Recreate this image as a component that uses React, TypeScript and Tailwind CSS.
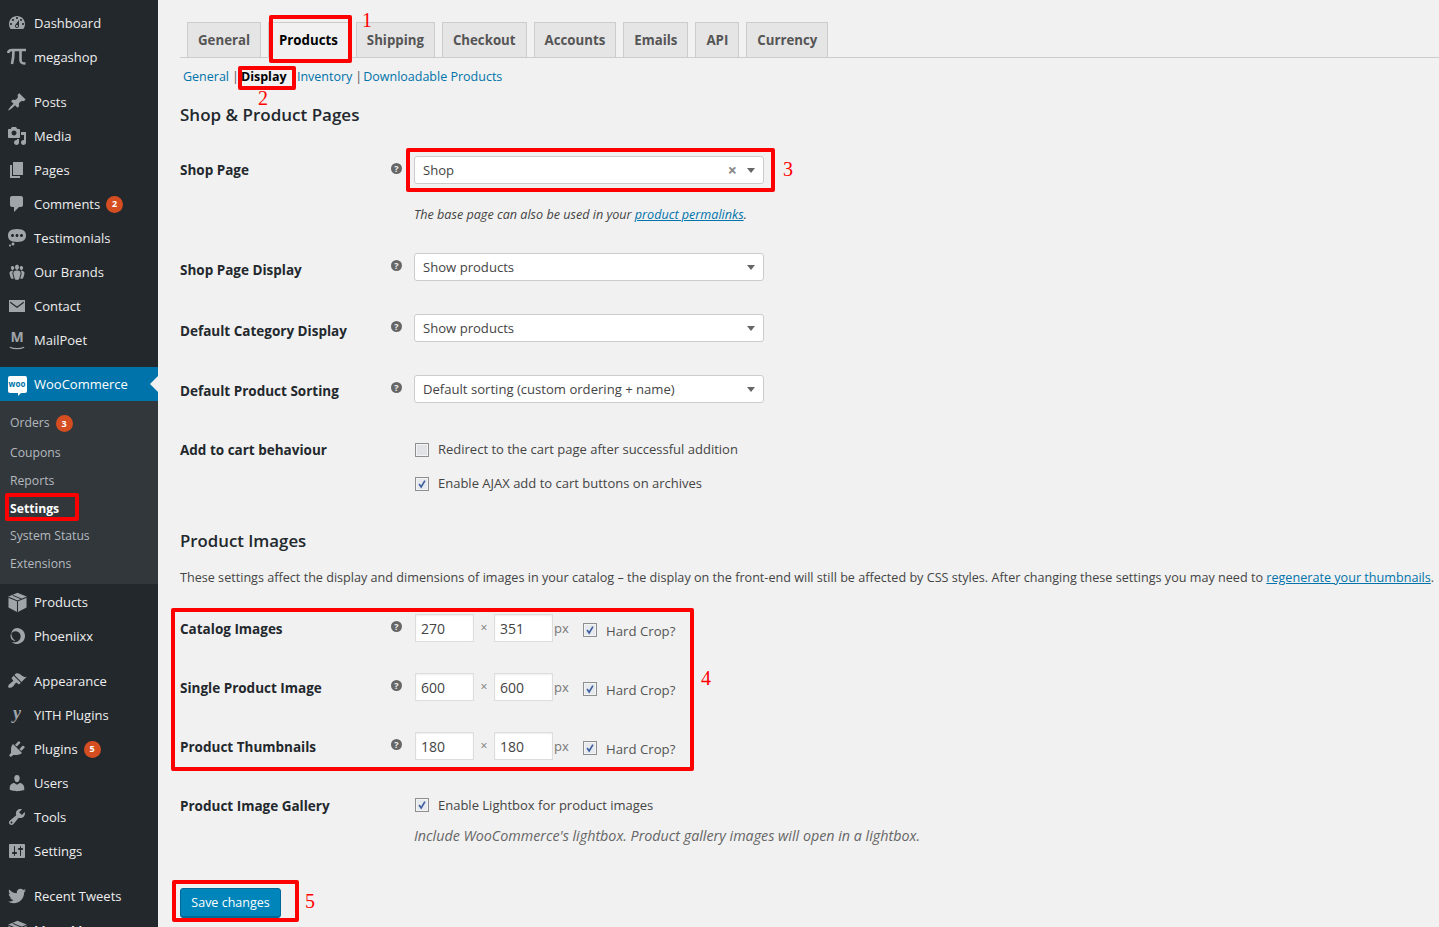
import type { ReactNode } from "react";

const d = {
  dashboard:
    "M3.76 16h12.48c1.1-1.37 1.76-3.11 1.76-5 0-4.42-3.58-8-8-8s-8 3.58-8 8c0 1.89.66 3.63 1.76 5zM10 4c.55 0 1 .45 1 1s-.45 1-1 1-1-.45-1-1 .45-1 1-1zM6 6c.55 0 1 .45 1 1s-.45 1-1 1-1-.45-1-1 .45-1 1-1zm8 0c.55 0 1 .45 1 1s-.45 1-1 1-1-.45-1-1 .45-1 1-1zm-5.37 5.55L12 7v6c0 1.1-.9 2-2 2s-2-.9-2-2c0-.57.24-1.08.63-1.45zM4 10c.55 0 1 .45 1 1s-.45 1-1 1-1-.45-1-1 .45-1 1-1zm12 0c.55 0 1 .45 1 1s-.45 1-1 1-1-.45-1-1 .45-1 1-1zm-5 3c0-.55-.45-1-1-1s-1 .45-1 1 .45 1 1 1 1-.45 1-1z",
  pin: "M10.44 3.02l1.82-1.82 6.36 6.35-1.83 1.82c-1.05-.68-2.48-.57-3.41.36l-.75.75c-.92.93-1.04 2.35-.35 3.41l-1.83 1.82-2.41-2.41-2.8 2.79c-.42.42-3.38 2.71-3.8 2.29s1.86-3.39 2.28-3.81l2.79-2.79L4.1 9.36l1.83-1.82c1.05.69 2.48.57 3.4-.36l.75-.75c.93-.92 1.05-2.35.36-3.41z",
  media:
    "M13 11V4c0-.55-.45-1-1-1h-1.67L9 1H5L3.67 3H2c-.55 0-1 .45-1 1v7c0 .55.45 1 1 1h10c.55 0 1-.45 1-1zM7 4.5c1.38 0 2.5 1.12 2.5 2.5S8.38 9.5 7 9.5 4.5 8.38 4.5 7 5.62 4.5 7 4.5zM14 6h5v10.5c0 1.38-1.12 2.5-2.5 2.5S14 17.88 14 16.5s1.12-2.5 2.5-2.5c.17 0 .34.02.5.05V9h-3V6zm-4 8.05V13h2v3.5c0 1.38-1.12 2.5-2.5 2.5S7 17.88 7 16.5 8.12 14 9.5 14c.17 0 .34.02.5.05z",
  page: "M6 15V2h10v13H6zm-1 1h8v2H3V5h2v11z",
  comment:
    "M5 2h9c1.1 0 2 .9 2 2v7c0 1.1-.9 2-2 2h-2l-5 5v-5H5c-1.1 0-2-.9-2-2V4c0-1.1.9-2 2-2z",
  status:
    "M10 1c7 0 9 2.91 9 6.5S17 14 10 14s-9-2.91-9-6.5S3 1 10 1zM5.5 9C6.33 9 7 8.33 7 7.5S6.33 6 5.5 6 4 6.67 4 7.5 4.67 9 5.5 9zM10 9c.83 0 1.5-.67 1.5-1.5S10.83 6 10 6s-1.5.67-1.5 1.5S9.17 9 10 9zm4.5 0c.83 0 1.5-.67 1.5-1.5S15.33 6 14.5 6 13 6.67 13 7.5 13.67 9 14.5 9zM6 14.5c.83 0 1.5.67 1.5 1.5s-.67 1.5-1.5 1.5-1.5-.67-1.5-1.5.67-1.5 1.5-1.5zm-3 2c.55 0 1 .45 1 1s-.45 1-1 1-1-.45-1-1 .45-1 1-1z",
  groups:
    "M8.03 4.46c-.29 1.28.55 3.46 1.97 3.46 1.41 0 2.25-2.18 1.96-3.46-.22-.98-1.08-1.63-1.96-1.63-.89 0-1.74.65-1.97 1.63zm-4.13.9c-.25 1.08.47 2.93 1.67 2.93s1.92-1.85 1.67-2.93c-.19-.83-.92-1.39-1.67-1.39s-1.48.56-1.67 1.39zm8.86 0c-.25 1.08.47 2.93 1.66 2.93 1.2 0 1.92-1.85 1.67-2.93-.19-.83-.92-1.39-1.67-1.39-.74 0-1.47.56-1.66 1.39zm-.59 11.43l1.25-4.3C14.2 10 12.71 8.47 10 8.47c-2.72 0-4.21 1.53-3.44 4.02l1.26 4.3C8.05 17.51 9 18 10 18c.98 0 1.94-.49 2.17-1.21zm-6.1-7.63c-.49.67-.96 1.83-.42 3.59l1.12 3.79c-.34.2-.77.31-1.2.31-.85 0-1.65-.41-1.85-1.03l-1.07-3.65c-.65-2.11.61-3.4 2.92-3.4.27 0 .54.02.79.06-.1.1-.2.22-.29.33zm8.35-.39c2.31 0 3.58 1.29 2.92 3.4l-1.07 3.65c-.2.62-1 1.03-1.85 1.03-.43 0-.86-.11-1.2-.31l1.11-3.79c.55-1.76.08-2.92-.42-3.59-.09-.11-.18-.23-.28-.33.25-.04.51-.06.79-.06z",
  mail: "M2 4h16v12H2V4zm1.200 1.600v1.500L10 12l6.800-4.900V5.600L10 10.500 3.200 5.600z",
  appearance:
    "M14.48 11.06L7.41 3.99l1.5-1.5c.5-.56 2.3-.47 3.51.32 1.21.8 1.43 1.28 2.91 2.1 1.18.64 2.45 1.26 4.45.85zm-.71.71L6.7 4.7 4.93 6.47c-.39.39-.39 1.02 0 1.41l1.06 1.06c.39.39.39 1.03 0 1.42-.6.6-1.43 1.11-2.21 1.69-.35.26-.7.53-1.01.84C1.43 13.23.75 15.82 1.5 16.5s3.33 0 4.68-1.35c.32-.31.58-.66.84-1.01.58-.78 1.09-1.61 1.69-2.21.39-.39 1.02-.39 1.41 0l1.06 1.06c.39.39 1.02.39 1.41 0z",
  plugin:
    "M13.11 4.36L9.87 7.6 8 5.73l3.24-3.24c.35-.34 1.05-.2 1.56.32.52.51.66 1.21.31 1.55zm-8 1.77l.91-1.12 9.01 9.01-1.19.84c-.71.71-2.63 1.16-3.82 1.16H6.14L4.9 17.26c-.59.59-1.54.59-2.12 0-.59-.58-.59-1.53 0-2.12l1.24-1.24v-3.88c0-1.13.4-3.19 1.09-3.89zm7.26 3.97l3.24-3.24c.34-.35 1.04-.21 1.55.31.52.51.66 1.21.31 1.55l-3.24 3.25z",
  users:
    "M10 9.25c-2.27 0-2.73-3.44-2.73-3.44C7 4.02 7.82 2 9.97 2c2.16 0 2.98 2.02 2.71 3.81 0 0-.41 3.44-2.68 3.44zm0 2.57L12.72 10c2.39 0 4.52 2.33 4.52 4.53v2.49s-3.65 1.13-7.24 1.13c-3.65 0-7.24-1.13-7.24-1.13v-2.49c0-2.25 1.94-4.48 4.47-4.48z",
  tools:
    "M16.68 9.77c-1.34 1.34-3.3 1.67-4.95.99l-5.41 6.52c-.99.99-2.59.99-3.58 0s-.99-2.59 0-3.57l6.52-5.42c-.68-1.65-.35-3.61.99-4.95 1.28-1.28 3.12-1.62 4.72-1.06l-2.89 2.89 2.82 2.82 2.86-2.87c.53 1.58.18 3.39-1.08 4.65zM3.81 16.21c.4.39 1.04.39 1.43 0 .4-.4.4-1.04 0-1.43-.39-.4-1.03-.4-1.43 0-.39.39-.39 1.03 0 1.43z",
  settings:
    "M18 16V4c0-.55-.45-1-1-1H3c-.55 0-1 .45-1 1v12c0 .55.45 1 1 1h14c.55 0 1-.45 1-1zM8 11h1c.55 0 1 .45 1 1s-.45 1-1 1H8v1.5c0 .28-.22.5-.5.5s-.5-.22-.5-.5V13H6c-.55 0-1-.45-1-1s.45-1 1-1h1V5.5c0-.28.22-.5.5-.5s.5.22.5.5V11zm5-2h-1c-.55 0-1-.45-1-1s.45-1 1-1h1V5.5c0-.28.22-.5.5-.5s.5.22.5.5V7h1c.55 0 1 .45 1 1s-.45 1-1 1h-1v5.5c0 .28-.22.5-.5.5s-.5-.22-.5-.5V9z",
  twitter:
    "M18.94 4.46c-.49.73-1.11 1.38-1.83 1.9.01.15.01.31.01.47 0 4.85-3.69 10.44-10.43 10.44-2.07 0-4-.61-5.63-1.65.29.03.58.05.88.05 1.72 0 3.3-.59 4.55-1.57-1.6-.03-2.95-1.09-3.42-2.55.22.04.45.07.69.07.33 0 .66-.05.96-.13-1.67-.34-2.94-1.82-2.94-3.6v-.04c.5.27 1.06.44 1.66.46-.98-.66-1.63-1.78-1.63-3.06 0-.67.18-1.3.5-1.84 1.81 2.22 4.51 3.68 7.56 3.83-.06-.27-.1-.55-.1-.84 0-2.02 1.65-3.66 3.67-3.66 1.06 0 2.01.44 2.68 1.16.83-.17 1.62-.47 2.33-.89-.28.85-.86 1.57-1.62 2.02.75-.08 1.45-.28 2.11-.57z",
  phoenix:
    "M10 2a8 8 0 1 1-5.500 13.800C7 17 12.500 16.500 13.500 11.500 14.200 8 12 5.500 9 5.200 6.500 5 5 6.300 4.300 8 4.500 4.800 7 2 10 2zM3.500 9.500c0-1 .4-1.800 1-2.300-.3 2 .5 5.500 4 7.500-3 .5-5-2-5-5.200z",
};

function Dash({ name }: { name: keyof typeof d }) {
  return (
    <svg viewBox="0 0 20 20" className="h-5 w-5 fill-[#a0a5aa]">
      <path d={d[name]} fillRule="evenodd" />
    </svg>
  );
}

function BoxIcon() {
  return (
    <svg viewBox="0 0 20 20" className="h-[21px] w-[21px]">
      <path d="M10 .8l8.600 3.400v10.600L10 19.400l-8.600-4.600V4.200z" className="fill-[#a0a5aa]" />
      <path
        d="M1.400 5L10 8.600 18.600 5M10 8.600V19M5.500 3.200l8.600 3.600"
        className="fill-none stroke-[#23282d]"
      />
    </svg>
  );
}

function Badge({ n }: { n: number }) {
  return (
    <span className="ml-[6px] flex h-[17px] w-[17px] items-center justify-center rounded-full bg-[#d54e21] text-[9px] font-bold text-white">
      {n}
    </span>
  );
}

function Item({
  icon,
  label,
  badge,
  gap,
}: {
  icon: ReactNode;
  label: string;
  badge?: number;
  gap?: boolean;
}) {
  return (
    <li
      className={`flex h-[34px] items-center text-[#eee] ${gap ? "mt-[11px]" : ""}`}
    >
      <span className="flex w-[34px] justify-center">{icon}</span>
      <span className="mt-[2px]">{label}</span>
      {badge ? <Badge n={badge} /> : null}
    </li>
  );
}

function Sidebar() {
  return (
    <aside className="w-[158px] shrink-0 bg-[#23282d] pt-[6px] text-[13px]">
      <ul>
        <Item icon={<Dash name="dashboard" />} label="Dashboard" />
        <Item
          icon={
            <svg viewBox="0 0 20 20" className="h-5 w-5 fill-none stroke-[#a0a5aa] stroke-[2.6]">
              <path d="M1 6c.5-2 2-3 4-3h14M6.500 3c0 6-.5 10-1.500 14M13.500 3v10c0 2.500 1 3.500 5 3.500" />
            </svg>
          }
          label="megashop"
        />
        <Item gap icon={<Dash name="pin" />} label="Posts" />
        <Item icon={<Dash name="media" />} label="Media" />
        <Item icon={<Dash name="page" />} label="Pages" />
        <Item icon={<Dash name="comment" />} label="Comments" badge={2} />
        <Item icon={<Dash name="status" />} label="Testimonials" />
        <Item icon={<Dash name="groups" />} label="Our Brands" />
        <Item icon={<Dash name="mail" />} label="Contact" />
        <Item
          icon={
            <span className="flex h-5 w-5 flex-col items-center leading-none text-[#a0a5aa]">
              <span className="text-[14px] font-bold">M</span>
              <svg viewBox="0 0 20 4" className="mt-[2px] h-1 w-4 fill-none stroke-[#a0a5aa] stroke-[1.5]">
                <path d="M1 1c5 2.500 13 2.500 18 0" />
              </svg>
            </span>
          }
          label="MailPoet"
        />
      </ul>

      <div className="relative mt-[10px] flex h-[34px] items-center bg-[#0073aa] text-white">
        <span className="flex w-[34px] justify-center">
          <span className="relative flex h-[17px] w-[19px] items-center justify-center rounded-[2px] bg-white text-[8px] font-bold leading-none text-[#0073aa]">
            woo
            <span className="absolute -bottom-[3px] left-[10px] border-r-[3px] border-t-[3px] border-r-transparent border-t-white" />
          </span>
        </span>
        <span className="mt-[2px]">WooCommerce</span>
        <span className="absolute right-0 top-[9px] border-y-[8px] border-r-[8px] border-y-transparent border-r-[#f1f1f1]" />
      </div>
      <ul className="h-[183px] bg-[#32373c] pl-[10px] pt-[7px] text-[12.200px] text-[#b4b9be]">
        <li className="flex h-[31px] items-center">
          Orders
          <Badge n={3} />
        </li>
        <li className="flex h-[28px] items-center">Coupons</li>
        <li className="flex h-[28px] items-center">Reports</li>
        <li className="flex h-[28px] items-center font-bold text-white">Settings</li>
        <li className="flex h-[27px] items-center">System Status</li>
        <li className="flex h-[28px] items-center">Extensions</li>
      </ul>

      <ul className="pt-px">
        <Item icon={<BoxIcon />} label="Products" />
        <Item icon={<Dash name="phoenix" />} label="Phoeniixx" />
        <Item gap icon={<Dash name="appearance" />} label="Appearance" />
        <Item
          icon={
            <span className="-mt-1 font-['Liberation_Serif',serif] text-[18px] font-bold italic leading-none text-[#a0a5aa]">
              y
            </span>
          }
          label="YITH Plugins"
        />
        <Item icon={<Dash name="plugin" />} label="Plugins" badge={5} />
        <Item icon={<Dash name="users" />} label="Users" />
        <Item icon={<Dash name="tools" />} label="Tools" />
        <Item icon={<Dash name="settings" />} label="Settings" />
        <Item gap icon={<Dash name="twitter" />} label="Recent Tweets" />
        <Item icon={<BoxIcon />} label="Mega Menu" />
      </ul>
    </aside>
  );
}

function Tab({ label, active }: { label: string; active?: boolean }) {
  return (
    <div
      className={`-mb-px flex h-9 items-center border border-[#ccc] px-[10px] text-[13.250px] font-bold ${
        active
          ? "border-b-[#f1f1f1] bg-[#f1f1f1] text-black"
          : "bg-[#e5e5e5] text-[#555]"
      }`}
    >
      <span className="mt-px">{label}</span>
    </div>
  );
}

function Help() {
  return (
    <span className="flex h-[11px] w-[11px] items-center justify-center rounded-full bg-[#666] text-[9px] font-bold leading-none text-[#f1f1f1]">
      ?
    </span>
  );
}

function Checkbox() {
  return (
    <span className="flex h-[14px] w-[14px] shrink-0 items-center justify-center border border-[#8e8f8f] bg-[#e6e9ee] shadow-[inset_0_0_0_1px_#f4f4f4]">
      <svg viewBox="0 0 12 12" className="h-[10px] w-[10px] fill-none stroke-[#3f5f9e] stroke-2">
        <path d="M2.500 6 5 9.500 9.500 2" />
      </svg>
    </span>
  );
}

function EmptyCheckbox() {
  return (
    <span className="h-[14px] w-[14px] shrink-0 border border-[#8e8f8f] bg-[#e2e3e6] shadow-[inset_0_0_0_1px_#f4f4f4]" />
  );
}

function Row({
  label,
  className,
  labelClass = "",
  help = true,
  children,
}: {
  label: string;
  className: string;
  labelClass?: string;
  help?: boolean;
  children: ReactNode;
}) {
  return (
    <div className={`flex ${className}`}>
      <div className="flex h-7 w-[234px] shrink-0 items-center">
        <span className={`w-[211px] text-[13.500px] font-bold text-[#23282d] ${labelClass}`}>
          {label}
        </span>
        {help ? (
          <span className="-mt-[3px]">
            <Help />
          </span>
        ) : null}
      </div>
      <div>{children}</div>
    </div>
  );
}

function Select({ value, clear }: { value: string; clear?: boolean }) {
  return (
    <div className="flex h-7 w-[350px] items-center rounded-[3px] border border-[#ccc] bg-white pl-2 pr-[8px] text-[13.100px] text-[#444]">
      <span className="mt-[2px] flex-1">{value}</span>
      {clear ? (
        <span className="mr-[10px] text-[16px] font-bold leading-none text-[#888]">×</span>
      ) : null}
      <span className="mt-px border-x-[4px] border-t-[5px] border-x-transparent border-t-[#666]" />
    </div>
  );
}

function Dimensions({ w, h }: { w: string; h: string }) {
  return (
    <div className="flex h-7 items-center text-[14px] text-[#444]">
      <span className="ml-px flex h-7 w-[59px] items-center border border-[#ddd] bg-white pl-[5px] shadow-[inset_0_1px_2px_rgba(0,0,0,0.07)]">
        {w}
      </span>
      <span className="flex w-[20px] justify-center text-[12px] text-[#777]">×</span>
      <span className="flex h-7 w-[59px] items-center border border-[#ddd] bg-white pl-[5px] shadow-[inset_0_1px_2px_rgba(0,0,0,0.07)]">
        {h}
      </span>
      <span className="ml-px mt-[2px] w-[29px] text-[13px] text-[#777]">px</span>
      <span className="mt-[4px]">
        <Checkbox />
      </span>
      <span className="ml-[9px] mt-[8px] text-[13.200px] text-[#555]">Hard Crop?</span>
    </div>
  );
}

function Annotation({ className }: { className: string }) {
  return (
    <div
      className={`pointer-events-none absolute rounded-[2px] border-[4px] border-[#ff0000] ${className}`}
    />
  );
}

function Mark({ n, className }: { n: number; className: string }) {
  return (
    <span
      className={`absolute font-['Liberation_Serif',serif] text-[20px] leading-[16px] text-[#ff0000] ${className}`}
    >
      {n}
    </span>
  );
}

export default function App() {
  return (
    <div className="relative flex h-[927px] overflow-hidden bg-[#f1f1f1] font-['Open_Sans',sans-serif]">
      <Sidebar />
      <main className="min-w-0 flex-1 pl-[22px] text-[#444]">
        <nav className="mt-[22px] flex h-9 gap-[7px] border-b border-[#ccc] pl-[7px]">
          <Tab label="General" />
          <Tab label="Products" active />
          <Tab label="Shipping" />
          <Tab label="Checkout" />
          <Tab label="Accounts" />
          <Tab label="Emails" />
          <Tab label="API" />
          <Tab label="Currency" />
        </nav>

        <div className="mt-[9px] flex h-5 items-center pl-[3px] text-[12.500px] text-[#0073aa]">
          <span>General</span>
          <span className="ml-[3px] text-[#555]">|</span>
          <span className="ml-[2px] w-[56px] font-bold text-black">Display</span>
          <span>Inventory</span>
          <span className="ml-[3px] mr-[1px] text-[#555]">|</span>
          <span>Downloadable Products</span>
        </div>

        <h2 className="mt-[19px] text-[17px] font-semibold leading-[18px] text-[#23282d]">
          Shop &amp; Product Pages
        </h2>

        <Row label="Shop Page" className="mt-[32px]">
          <Select value="Shop" clear />
          <p className="mt-[21px] text-[12.600px] italic leading-5 text-[#444]">
            The base page can also be used in your{" "}
            <span className="text-[#0073aa] underline">product permalinks</span>.
          </p>
        </Row>
        <Row label="Shop Page Display" labelClass="mt-[6px]" className="mt-[28px]">
          <Select value="Show products" />
        </Row>
        <Row label="Default Category Display" labelClass="mt-[6px]" className="mt-[33px]">
          <Select value="Show products" />
        </Row>
        <Row label="Default Product Sorting" labelClass="mt-[4px]" className="mt-[33px]">
          <Select value="Default sorting (custom ordering + name)" />
        </Row>
        <Row label="Add to cart behaviour" help={false} className="mt-[33px]">
          <div className="flex h-7 items-center gap-[9px] pl-px text-[13px]">
            <EmptyCheckbox />
            Redirect to the cart page after successful addition
          </div>
          <div className="mt-[6px] flex h-7 items-center gap-[9px] pl-px text-[13px]">
            <Checkbox />
            Enable AJAX add to cart buttons on archives
          </div>
        </Row>

        <h2 className="mt-[31px] text-[16.800px] font-semibold leading-6 text-[#23282d]">
          Product Images
        </h2>
        <p className="mt-[15px] whitespace-nowrap text-[12.620px] leading-5">
          These settings affect the display and dimensions of images in your catalog – the display
          on the front-end will still be affected by CSS styles. After changing these settings you
          may need to <span className="text-[#0073aa] underline">regenerate your thumbnails</span>.
        </p>

        <Row label="Catalog Images" labelClass="mt-[2px]" className="mt-[26px]">
          <Dimensions w="270" h="351" />
        </Row>
        <Row label="Single Product Image" labelClass="mt-[2px]" className="mt-[31px]">
          <Dimensions w="600" h="600" />
        </Row>
        <Row label="Product Thumbnails" labelClass="mt-[2px]" className="mt-[31px]">
          <Dimensions w="180" h="180" />
        </Row>
        <Row label="Product Image Gallery" labelClass="mt-[2px]" help={false} className="mt-[31px]">
          <div className="flex h-7 items-center gap-[9px] pl-px text-[13px]">
            <Checkbox />
            <span className="mt-[2px]">Enable Lightbox for product images</span>
          </div>
          <p className="mt-[7px] text-[14.300px] italic leading-5 text-[#666]">
            Include WooCommerce's lightbox. Product gallery images will open in a lightbox.
          </p>
        </Row>

        <button className="mt-[42px] h-[30px] w-[101px] rounded-[3px] border border-[#006799] bg-[#0085ba] text-[12.500px] text-white shadow-[inset_0_-1px_0_#006799]">
          Save changes
        </button>
      </main>

      <Annotation className="left-[269px] top-[15px] h-[48px] w-[83px]" />
      <Annotation className="left-[238px] top-[66px] h-[24px] w-[58px]" />
      <Annotation className="left-[406px] top-[148px] h-[44px] w-[369px]" />
      <Annotation className="left-[171px] top-[608px] h-[163px] w-[523px]" />
      <Annotation className="left-[172px] top-[880px] h-[42px] w-[127px]" />
      <Annotation className="left-[5px] top-[493px] h-[28px] w-[74px]" />
      <Mark n={1} className="left-[362px] top-[12px]" />
      <Mark n={2} className="left-[258px] top-[90px]" />
      <Mark n={3} className="left-[783px] top-[161px]" />
      <Mark n={4} className="left-[701px] top-[670px]" />
      <Mark n={5} className="left-[305px] top-[893px]" />
    </div>
  );
}
